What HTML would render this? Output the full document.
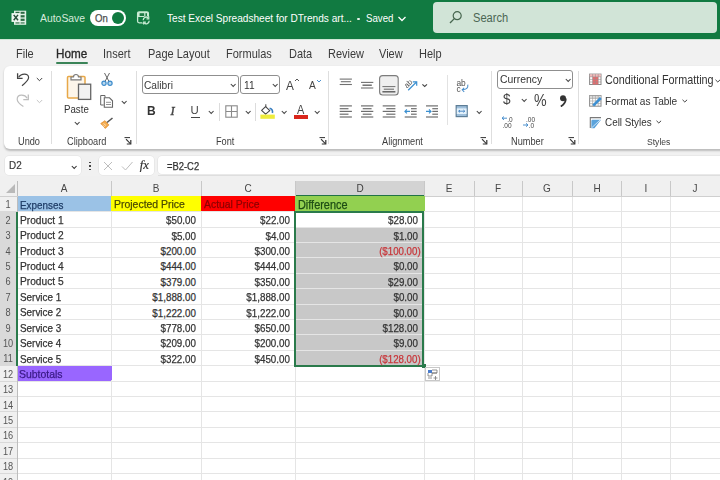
<!DOCTYPE html>
<html><head><meta charset="utf-8"><style>
html,body{margin:0;padding:0}
body{width:720px;height:480px;overflow:hidden;position:relative;background:#f1f1f1;font-family:"Liberation Sans",sans-serif}
.t{position:absolute;line-height:1;white-space:pre}
.r{position:absolute}
#wrap{position:absolute;left:0;top:0;width:720px;height:480px;overflow:hidden;filter:blur(0.4px)}
</style></head><body><div id="wrap">
<div class="r" style="left:0px;top:0px;width:720px;height:38.5px;background:#117a41"></div>
<div class="r" style="left:0px;top:38.5px;width:720px;height:1.5px;background:#cfe6d6"></div>
<svg class="r" style="left:11px;top:10px" width="16" height="16" viewBox="0 0 16 16"><rect x="3" y="0.7" width="12.2" height="14.1" fill="#dff1e4"/><g fill="#2c6a43"><rect x="4.5" y="1.8" width="4" height="2"/><rect x="9.6" y="1.8" width="4" height="2"/><rect x="9.6" y="5.2" width="4" height="2.2"/><rect x="9.6" y="8.7" width="4" height="2.2"/><rect x="4.5" y="12" width="4" height="1.8" opacity="0.6"/><rect x="9.6" y="12" width="4" height="1.8" opacity="0.6"/></g><rect x="0.5" y="3.1" width="8.6" height="8.8" fill="#eef8f1"/><path d="M2.7 4.9l4.3 5.4M7 4.9l-4.3 5.4" stroke="#28503a" stroke-width="1.5"/></svg>
<div class="t" style="left:40.00px;top:12.52px;font-size:11.44px;color:#d6eadc;font-weight:400;transform:scaleX(0.9091);transform-origin:left;">AutoSave</div>
<div class="r" style="left:90px;top:10px;width:36.3px;height:16px;background:#fff;border-radius:8px"></div>
<div class="t" style="left:94.90px;top:12.96px;font-size:10.56px;color:#505050;font-weight:400;transform:scaleX(0.9091);transform-origin:left;-webkit-text-stroke:0.25px #505050">On</div>
<div class="r" style="left:111.7px;top:11.8px;width:12.3px;height:12.3px;border-radius:50%;background:#117a41"></div>
<svg class="r" style="left:135px;top:10px" width="16" height="16" viewBox="0 0 16 16"><rect x="2.6" y="2" width="10.8" height="10.8" rx="1.5" fill="none" stroke="#c9ecd4" stroke-width="1.3"/><rect x="2.6" y="2" width="10.8" height="5" fill="#c9ecd4"/><rect x="4.6" y="3.2" width="4.6" height="2.8" fill="#1f7a45"/><rect x="10.4" y="3.2" width="1.6" height="2.8" fill="#1f7a45"/><circle cx="11.2" cy="10.5" r="4.3" fill="#117a41"/><path d="M8.2 10.2a3 3 0 0 1 5.2 -2" fill="none" stroke="#c9ecd4" stroke-width="1.3"/><path d="M14.2 10.8a3 3 0 0 1 -5.2 2" fill="none" stroke="#c9ecd4" stroke-width="1.3"/><path d="M13.8 6.6v2.3h-2.3M8.6 14.4v-2.3h2.3" fill="none" stroke="#c9ecd4" stroke-width="1.1"/></svg>
<div class="t" style="left:166.60px;top:13.00px;font-size:11.11px;color:#ffffff;font-weight:400;transform:scaleX(0.9091);transform-origin:left;">Test Excel Spreadsheet for DTrends art...</div>
<div class="r" style="left:357px;top:17.6px;width:2.6px;height:2.6px;border-radius:50%;background:#e8f3eb"></div>
<div class="t" style="left:365.60px;top:13.37px;font-size:10.67px;color:#ffffff;font-weight:400;transform:scaleX(0.9091);transform-origin:left;">Saved</div>
<svg class="r" style="left:397px;top:15px" width="10" height="8" viewBox="0 0 10 8"><path d="M1.5 2l3.5 3.5 3.5-3.5" fill="none" stroke="#fff" stroke-width="1.3"/></svg>
<div class="r" style="left:432.8px;top:2px;width:284.4px;height:31px;background:#d1e4d7;border-radius:4px"></div>
<svg class="r" style="left:448px;top:10px" width="16" height="15" viewBox="0 0 16 15"><circle cx="9.2" cy="5.7" r="4" fill="none" stroke="#47664f" stroke-width="1.2"/><path d="M6.3 8.6l-4.3 4.4" stroke="#47664f" stroke-width="1.3"/></svg>
<div class="t" style="left:473.00px;top:12.26px;font-size:12.21px;color:#4b6653;font-weight:400;transform:scaleX(0.9091);transform-origin:left;">Search</div>
<div class="t" style="left:16.10px;top:48.26px;font-size:12.10px;color:#3b3b3b;font-weight:400;transform:scaleX(0.9091);transform-origin:left;">File</div>
<div class="t" style="left:56.10px;top:47.61px;font-size:12.87px;color:#2a2a2a;font-weight:400;transform:scaleX(0.9091);transform-origin:left;-webkit-text-stroke:0.35px #2a2a2a">Home</div>
<div class="t" style="left:102.70px;top:48.26px;font-size:12.10px;color:#3b3b3b;font-weight:400;transform:scaleX(0.9091);transform-origin:left;">Insert</div>
<div class="t" style="left:147.70px;top:48.26px;font-size:12.10px;color:#3b3b3b;font-weight:400;transform:scaleX(0.9091);transform-origin:left;">Page Layout</div>
<div class="t" style="left:226.10px;top:48.26px;font-size:12.10px;color:#3b3b3b;font-weight:400;transform:scaleX(0.9091);transform-origin:left;">Formulas</div>
<div class="t" style="left:288.60px;top:48.26px;font-size:12.10px;color:#3b3b3b;font-weight:400;transform:scaleX(0.9091);transform-origin:left;">Data</div>
<div class="t" style="left:328.20px;top:48.26px;font-size:12.10px;color:#3b3b3b;font-weight:400;transform:scaleX(0.9091);transform-origin:left;">Review</div>
<div class="t" style="left:378.70px;top:48.26px;font-size:12.10px;color:#3b3b3b;font-weight:400;transform:scaleX(0.9091);transform-origin:left;">View</div>
<div class="t" style="left:419.00px;top:48.26px;font-size:12.10px;color:#3b3b3b;font-weight:400;transform:scaleX(0.9091);transform-origin:left;">Help</div>
<div class="r" style="left:56.4px;top:62.2px;width:31.6px;height:1.8px;background:#3b8458;border-radius:1px"></div>
<div class="r" style="left:4.4px;top:66px;width:730px;height:82.5px;background:#fff;border-radius:6px;box-shadow:0 1.5px 2px rgba(0,0,0,0.22)"></div>
<div class="r" style="left:51.4px;top:71px;width:1px;height:73px;background:#dedede"></div>
<div class="r" style="left:135.5px;top:71px;width:1px;height:73px;background:#dedede"></div>
<div class="r" style="left:328.4px;top:71px;width:1px;height:73px;background:#dedede"></div>
<div class="r" style="left:490.6px;top:71px;width:1px;height:73px;background:#dedede"></div>
<div class="r" style="left:578px;top:71px;width:1px;height:73px;background:#dedede"></div>
<div class="r" style="left:447.3px;top:75px;width:1px;height:50px;background:#e2e2e2"></div>
<div class="r" style="left:219px;top:102.5px;width:1px;height:18px;background:#dcdcdc"></div>
<div class="r" style="left:255.3px;top:102.5px;width:1px;height:18px;background:#dcdcdc"></div>
<div class="t" style="left:18.30px;top:136.83px;font-size:10.12px;color:#3d3d3d;font-weight:400;transform:scaleX(0.9091);transform-origin:left;">Undo</div>
<div class="t" style="left:66.80px;top:136.83px;font-size:10.12px;color:#3d3d3d;font-weight:400;transform:scaleX(0.9091);transform-origin:left;">Clipboard</div>
<div class="t" style="left:216.40px;top:136.83px;font-size:10.12px;color:#3d3d3d;font-weight:400;transform:scaleX(0.9091);transform-origin:left;">Font</div>
<div class="t" style="left:381.50px;top:136.83px;font-size:10.12px;color:#3d3d3d;font-weight:400;transform:scaleX(0.9091);transform-origin:left;">Alignment</div>
<div class="t" style="left:511.30px;top:136.83px;font-size:10.12px;color:#3d3d3d;font-weight:400;transform:scaleX(0.9091);transform-origin:left;">Number</div>
<div class="t" style="left:646.50px;top:137.39px;font-size:9.46px;color:#3d3d3d;font-weight:400;transform:scaleX(0.9091);transform-origin:left;">Styles</div>
<svg class="r" style="left:124.3px;top:137px" width="8" height="8" viewBox="0 0 8 8"><path d="M0.5 0.6h5.5" stroke="#333" stroke-width="1"/><path d="M2 2.2l4.6 4.6" stroke="#333" stroke-width="1.1"/><path d="M6.8 3v4h-4" fill="none" stroke="#333" stroke-width="1.2"/></svg>
<svg class="r" style="left:318.5px;top:137px" width="8" height="8" viewBox="0 0 8 8"><path d="M0.5 0.6h5.5" stroke="#333" stroke-width="1"/><path d="M2 2.2l4.6 4.6" stroke="#333" stroke-width="1.1"/><path d="M6.8 3v4h-4" fill="none" stroke="#333" stroke-width="1.2"/></svg>
<svg class="r" style="left:479.5px;top:137px" width="8" height="8" viewBox="0 0 8 8"><path d="M0.5 0.6h5.5" stroke="#333" stroke-width="1"/><path d="M2 2.2l4.6 4.6" stroke="#333" stroke-width="1.1"/><path d="M6.8 3v4h-4" fill="none" stroke="#333" stroke-width="1.2"/></svg>
<svg class="r" style="left:567.7px;top:137px" width="8" height="8" viewBox="0 0 8 8"><path d="M0.5 0.6h5.5" stroke="#333" stroke-width="1"/><path d="M2 2.2l4.6 4.6" stroke="#333" stroke-width="1.1"/><path d="M6.8 3v4h-4" fill="none" stroke="#333" stroke-width="1.2"/></svg>
<svg class="r" style="left:14px;top:70px" width="18" height="20" viewBox="14 70 18 20"><path d="M18.6 77.3C21 73.2 28.6 72.6 28.6 77.6C28.6 80.3 25.2 83.2 22 85.8" fill="none" stroke="#444" stroke-width="1.2"/><path d="M17.6 73.2V78.4H22.6" fill="none" stroke="#444" stroke-width="1.3"/></svg>
<svg class="r" style="left:36.2px;top:76.8px" width="7" height="5" viewBox="0 0 7 5"><path d="M0.8 1l2.7 2.7 2.7-2.7" fill="none" stroke="#444" stroke-width="1.0"/></svg>
<svg class="r" style="left:14px;top:91px" width="18" height="19" viewBox="14 91 18 19"><path d="M27.2 98.2C24.8 94 17.2 93.8 17.2 99.2C17.2 102 20.4 104.6 23.4 106.4" fill="none" stroke="#bdbdbd" stroke-width="1.2"/><path d="M28.3 94.4V99.6H23.3" fill="none" stroke="#bdbdbd" stroke-width="1.3"/></svg>
<svg class="r" style="left:36.4px;top:99.2px" width="7" height="5" viewBox="0 0 7 5"><path d="M0.8 1l2.7 2.7 2.7-2.7" fill="none" stroke="#c4c4c4" stroke-width="1.0"/></svg>
<svg class="r" style="left:64px;top:71px" width="30" height="30" viewBox="0 0 30 30"><rect x="3.5" y="5.5" width="17.5" height="21.5" rx="1" fill="#fdf6ea" stroke="#e8a848" stroke-width="1.5"/><path d="M7 8.8h10v-2.8h-2.5a2.5 2.5 0 0 0 -5 0h-2.5z" fill="#fff" stroke="#7a7a7a" stroke-width="1.2"/><rect x="14.5" y="13.2" width="12.2" height="15.2" fill="#f2f2f2" stroke="#666" stroke-width="1.3"/></svg>
<div class="t" style="left:64.30px;top:103.77px;font-size:10.67px;color:#333;font-weight:400;transform:scaleX(0.9091);transform-origin:left;">Paste</div>
<svg class="r" style="left:73.8px;top:121.0px" width="7" height="5" viewBox="0 0 7 5"><path d="M0.8 1l2.4 2.4 2.4-2.4" fill="none" stroke="#444" stroke-width="1.05"/></svg>
<svg class="r" style="left:101px;top:72px" width="12" height="15" viewBox="0 0 12 15"><path d="M3.5 1l4.5 8.5M8.5 1l-4.5 8.5" stroke="#666" stroke-width="1"/><circle cx="3" cy="11.3" r="2.1" fill="#bcd9ee" stroke="#3d8ccc" stroke-width="1.2"/><circle cx="9" cy="11.3" r="2.1" fill="#bcd9ee" stroke="#3d8ccc" stroke-width="1.2"/></svg>
<svg class="r" style="left:99.5px;top:94.5px" width="14" height="13" viewBox="0 0 14 13"><path d="M5 2.5v-2h-4.3v9.5h3" fill="none" stroke="#666" stroke-width="1"/><path d="M4.3 2.8h5.2l3 3v6.5h-8.2z" fill="#fff" stroke="#666" stroke-width="1.1"/><path d="M6 7.3h5M6 9.5h5" stroke="#888" stroke-width="0.9"/></svg>
<svg class="r" style="left:120.5px;top:99.7px" width="7" height="5" viewBox="0 0 7 5"><path d="M0.8 1l2.4 2.4 2.4-2.4" fill="none" stroke="#444" stroke-width="1.05"/></svg>
<svg class="r" style="left:100px;top:116.5px" width="14" height="12" viewBox="0 0 14 12"><path d="M0.8 6.5l4.2-2.8 3.8 4.2-3.5 3.5z" fill="#f3ab4e" stroke="#e08a2a" stroke-width="0.8"/><path d="M7 5.5l5.5-4.5" stroke="#555" stroke-width="1.6"/><path d="M2.5 8.2l2.3 1.6M3.5 6.5l2.5 2" stroke="#fff" stroke-width="0.6"/></svg>
<div class="r" style="left:142px;top:75.3px;width:97px;height:19px;box-sizing:border-box;border:1px solid #8f8f8f;border-radius:3px;background:#fff"></div>
<div class="t" style="left:144.20px;top:80.00px;font-size:11.22px;color:#3a3a3a;font-weight:400;transform:scaleX(0.9091);transform-origin:left;">Calibri</div>
<svg class="r" style="left:229.8px;top:83.2px" width="7" height="5" viewBox="0 0 7 5"><path d="M0.8 1l2.4 2.4 2.4-2.4" fill="none" stroke="#444" stroke-width="1.05"/></svg>
<div class="r" style="left:240.3px;top:75.3px;width:39.3px;height:19px;box-sizing:border-box;border:1px solid #8f8f8f;border-radius:3px;background:#fff"></div>
<div class="t" style="left:243.70px;top:80.10px;font-size:11.22px;color:#333;font-weight:400;transform:scaleX(0.9091);transform-origin:left;">11</div>
<svg class="r" style="left:271.8px;top:83.2px" width="7" height="5" viewBox="0 0 7 5"><path d="M0.8 1l2.4 2.4 2.4-2.4" fill="none" stroke="#444" stroke-width="1.05"/></svg>
<div class="t" style="left:285.70px;top:78.61px;font-size:12.98px;color:#444;font-weight:400;transform:scaleX(0.9091);transform-origin:left;">A</div>
<svg class="r" style="left:294px;top:78px" width="6" height="4" viewBox="0 0 6 4"><path d="M1 3l2-2 2 2" fill="none" stroke="#444" stroke-width="0.9"/></svg>
<div class="t" style="left:308.50px;top:80.10px;font-size:11.22px;color:#444;font-weight:400;transform:scaleX(0.9091);transform-origin:left;">A</div>
<svg class="r" style="left:315.5px;top:79px" width="6" height="4" viewBox="0 0 6 4"><path d="M1 1l2 2 2-2" fill="none" stroke="#3a86c8" stroke-width="0.9"/></svg>
<div class="t" style="left:147.00px;top:104.33px;font-size:13.20px;color:#333;font-weight:700;transform:scaleX(0.9091);transform-origin:left;">B</div>
<div class="t" style="left:170.40px;top:105.22px;font-size:12.50px;color:#444;font-weight:400;transform:scaleX(1.0000);transform-origin:left;font-family:'Liberation Serif';font-style:italic;-webkit-text-stroke:0.4px #444">I</div>
<div class="t" style="left:190.60px;top:105.35px;font-size:11.40px;color:#444;font-weight:400;transform:scaleX(1.0000);transform-origin:left;">U</div>
<div class="r" style="left:191px;top:117.2px;width:8.5px;height:1.1px;background:#444"></div>
<svg class="r" style="left:207.8px;top:109.7px" width="7" height="5" viewBox="0 0 7 5"><path d="M0.8 1l2.4 2.4 2.4-2.4" fill="none" stroke="#444" stroke-width="1.05"/></svg>
<svg class="r" style="left:224.5px;top:104.8px" width="13" height="13" viewBox="0 0 13 13"><rect x="0.8" y="0.8" width="11.4" height="11.4" fill="none" stroke="#8a8a8a" stroke-width="1.1"/><path d="M6.5 1v11M1 6.5h11" stroke="#8a8a8a" stroke-width="1.1"/></svg>
<svg class="r" style="left:244.8px;top:109.7px" width="7" height="5" viewBox="0 0 7 5"><path d="M0.8 1l2.4 2.4 2.4-2.4" fill="none" stroke="#444" stroke-width="1.05"/></svg>
<svg class="r" style="left:258px;top:102px" width="19" height="19" viewBox="258 102 19 19"><path d="M265.8 104.2V107.6" stroke="#555" stroke-width="1.1"/><path d="M265.6 106.6L269.8 110.6L265.6 114.2L261.6 110.4z" fill="#fff" stroke="#444" stroke-width="1.1" stroke-linejoin="round"/><path d="M269.6 108.2Q273.2 109.2 272.4 113" fill="none" stroke="#3a7fc0" stroke-width="1.6"/><rect x="260.4" y="114.6" width="14.4" height="4.2" fill="#eeec3c"/></svg>
<svg class="r" style="left:280.6px;top:109.7px" width="7" height="5" viewBox="0 0 7 5"><path d="M0.8 1l2.4 2.4 2.4-2.4" fill="none" stroke="#444" stroke-width="1.05"/></svg>
<div class="t" style="left:297.40px;top:104.16px;font-size:12.10px;color:#444;font-weight:400;transform:scaleX(0.9091);transform-origin:left;">A</div>
<div class="r" style="left:293.8px;top:115.3px;width:14.2px;height:3.6px;background:#d9261c"></div>
<svg class="r" style="left:314.1px;top:109.7px" width="7" height="5" viewBox="0 0 7 5"><path d="M0.8 1l2.4 2.4 2.4-2.4" fill="none" stroke="#444" stroke-width="1.05"/></svg>
<svg class="r" style="left:330px;top:70px" width="115" height="55" viewBox="330 70 115 55"><path d="M339.7 79.1H351.9" stroke="#707070" stroke-width="1.1"/><path d="M340.8 81.7H350.8" stroke="#707070" stroke-width="1.1"/><path d="M339.7 84.5H351.9" stroke="#707070" stroke-width="1.1"/><path d="M361 82.4H373.3" stroke="#707070" stroke-width="1.1"/><path d="M362.5 85.2H371.8" stroke="#666" stroke-width="1.4"/><path d="M361 88.0H373.3" stroke="#707070" stroke-width="1.1"/><rect x="379.6" y="75.6" width="18.6" height="19.4" rx="3" fill="#efefef" stroke="#7c7c7c" stroke-width="1.1"/><path d="M382.4 86.6H395.4" stroke="#707070" stroke-width="1.0"/><path d="M383.8 89.2H394" stroke="#707070" stroke-width="1.1"/><path d="M382.4 91.8H395.4" stroke="#5a5a5a" stroke-width="1.4"/><g transform="rotate(-45 408.2 83.2)"><text x="403.6" y="86" font-size="7.6" fill="#4a4a4a" font-family="Liberation Sans">ab</text></g><path d="M408.2 90.2L416.5 82" stroke="#3a8fd0" stroke-width="1.2"/><path d="M412.8 81.9H416.7V85.8" fill="none" stroke="#3a8fd0" stroke-width="1.2"/><path d="M422.4 84.3l2.3 2.2 2.3-2.2" fill="none" stroke="#444" stroke-width="1.1"/><path d="M339.7 105.9H351.9" stroke="#6e6e6e" stroke-width="1.2"/><path d="M339.7 108.7H348.484" stroke="#6e6e6e" stroke-width="1.2"/><path d="M339.7 111.4H351.9" stroke="#6e6e6e" stroke-width="1.2"/><path d="M339.7 114.2H348.484" stroke="#6e6e6e" stroke-width="1.2"/><path d="M339.7 117.0H351.9" stroke="#6e6e6e" stroke-width="1.2"/><path d="M361 105.9H373.3" stroke="#6e6e6e" stroke-width="1.2"/><path d="M362.722 108.7H371.578" stroke="#6e6e6e" stroke-width="1.2"/><path d="M361 111.4H373.3" stroke="#6e6e6e" stroke-width="1.2"/><path d="M362.722 114.2H371.578" stroke="#6e6e6e" stroke-width="1.2"/><path d="M361 117.0H373.3" stroke="#6e6e6e" stroke-width="1.2"/><path d="M382.7 105.9H395.4" stroke="#6e6e6e" stroke-width="1.2"/><path d="M386.256 108.7H395.4" stroke="#6e6e6e" stroke-width="1.2"/><path d="M382.7 111.4H395.4" stroke="#6e6e6e" stroke-width="1.2"/><path d="M386.256 114.2H395.4" stroke="#6e6e6e" stroke-width="1.2"/><path d="M382.7 117.0H395.4" stroke="#6e6e6e" stroke-width="1.2"/><path d="M404.7 105.9H416.7" stroke="#6e6e6e" stroke-width="1.2"/><path d="M411.0 108.7H416.7" stroke="#6e6e6e" stroke-width="1.2"/><path d="M411.0 111.4H416.7" stroke="#6e6e6e" stroke-width="1.2"/><path d="M411.0 114.2H416.7" stroke="#6e6e6e" stroke-width="1.2"/><path d="M404.7 117.0H416.7" stroke="#6e6e6e" stroke-width="1.2"/><path d="M410 111.4H404.9M406.9 109.4l-2 2 2 2" fill="none" stroke="#3a8fd0" stroke-width="1.1"/><path d="M426 105.9H438" stroke="#6e6e6e" stroke-width="1.2"/><path d="M432.3 108.7H438" stroke="#6e6e6e" stroke-width="1.2"/><path d="M432.3 111.4H438" stroke="#6e6e6e" stroke-width="1.2"/><path d="M432.3 114.2H438" stroke="#6e6e6e" stroke-width="1.2"/><path d="M426 117.0H438" stroke="#6e6e6e" stroke-width="1.2"/><path d="M426 111.4H431M429 109.4l2 2-2 2" fill="none" stroke="#3a8fd0" stroke-width="1.1"/></svg>
<svg class="r" style="left:453px;top:76px" width="19" height="18" viewBox="453 76 19 18"><text x="456.4" y="85.6" font-size="8.4" fill="#505050" font-family="Liberation Sans">ab</text><text x="456.4" y="91.8" font-size="8.4" fill="#505050" font-family="Liberation Sans">c</text><path d="M467.8 84.6Q468.6 89.6 462.2 89.8M464.2 87.8l-2 2 2 2" fill="none" stroke="#4a8fcc" stroke-width="1.1"/></svg>
<svg class="r" style="left:453px;top:103px" width="17" height="16" viewBox="453 103 17 16"><rect x="456.2" y="105.6" width="11" height="11" fill="#9fc0dc" stroke="#5d7d96" stroke-width="1.2"/><rect x="456.8" y="108.4" width="9.8" height="5.6" fill="#e3f1fb"/><path d="M458.6 111.2H464.8M460 110l-1.3 1.2 1.3 1.2M463.4 110l1.3 1.2-1.3 1.2" fill="none" stroke="#3d7fc0" stroke-width="0.9"/></svg>
<svg class="r" style="left:475.6px;top:110.0px" width="7" height="5" viewBox="0 0 7 5"><path d="M0.8 1l2.4 2.4 2.4-2.4" fill="none" stroke="#444" stroke-width="1.05"/></svg>
<div class="r" style="left:497px;top:69.5px;width:76px;height:19px;box-sizing:border-box;border:1px solid #8f8f8f;border-radius:3px;background:#fff"></div>
<div class="t" style="left:499.50px;top:74.12px;font-size:11.44px;color:#333;font-weight:400;transform:scaleX(0.9091);transform-origin:left;">Currency</div>
<svg class="r" style="left:564.8px;top:77.7px" width="7" height="5" viewBox="0 0 7 5"><path d="M0.8 1l2.4 2.4 2.4-2.4" fill="none" stroke="#444" stroke-width="1.05"/></svg>
<div class="t" style="left:502.60px;top:91.94px;font-size:14.96px;color:#444;font-weight:400;transform:scaleX(0.9091);transform-origin:left;">$</div>
<svg class="r" style="left:520.8px;top:97.7px" width="7" height="5" viewBox="0 0 7 5"><path d="M0.8 1l2.4 2.4 2.4-2.4" fill="none" stroke="#444" stroke-width="1.05"/></svg>
<div class="t" style="left:533.90px;top:92.78px;font-size:15.62px;color:#444;font-weight:400;transform:scaleX(0.9091);transform-origin:left;">%</div>
<svg class="r" style="left:558.5px;top:95px" width="8" height="12" viewBox="0 0 8 12"><circle cx="4" cy="3.3" r="3" fill="#333"/><path d="M6.8 3.5q0 5-5 8" fill="none" stroke="#333" stroke-width="1.8"/></svg>
<svg class="r" style="left:500.5px;top:115px" width="15" height="14" viewBox="0 0 15 14"><path d="M6 3.2h-5M3 1.5l-2 1.7 2 1.7" fill="none" stroke="#3a86c8" stroke-width="0.9"/><text x="6.3" y="6.5" font-size="6.5" fill="#444" font-family="Liberation Sans">.0</text><text x="1.5" y="13" font-size="6.5" fill="#444" font-family="Liberation Sans">.00</text></svg>
<svg class="r" style="left:521.5px;top:115px" width="16" height="14" viewBox="0 0 16 14"><text x="4" y="6.5" font-size="6.5" fill="#444" font-family="Liberation Sans">.00</text><path d="M1 10h5M4 8.3l2 1.7-2 1.7" fill="none" stroke="#3a86c8" stroke-width="0.9"/><text x="6.8" y="13" font-size="6.5" fill="#444" font-family="Liberation Sans">.0</text></svg>
<svg class="r" style="left:586px;top:70px" width="18" height="62" viewBox="586 70 18 62"><rect x="589.6" y="74.1" width="11.4" height="10.4" fill="#fff" stroke="#8a8a8a" stroke-width="1"/><rect x="592.6" y="76.8" width="5.6" height="7.6" fill="#ec6a6c"/><rect x="589.8" y="74.3" width="11" height="2.5" fill="#f3b9ba"/><path d="M592.6 74.1V84.5M595.4 74.1V84.5M598.2 74.1V84.5M589.6 76.8H601M589.6 79.4H601M589.6 82H601" stroke="#9a8a8a" stroke-width="0.6"/><rect x="589.6" y="95.6" width="11.4" height="10.6" fill="#fff" stroke="#8a8a8a" stroke-width="1"/><rect x="589.8" y="95.8" width="11" height="2.6" fill="#d9d9d9"/><path d="M592.6 95.6V106.2M595.4 95.6V106.2M598.2 95.6V106.2M589.6 98.4H601M589.6 101H601M589.6 103.6H601" stroke="#9a9a9a" stroke-width="0.6"/><path d="M593.2 105.6L600.8 98" stroke="#3d8fd1" stroke-width="2.6"/><path d="M589.8 117.6H601M590.3 117.6V128" fill="none" stroke="#7a7a7a" stroke-width="1.1"/><path d="M592.2 119.8H601L594.5 128.2H591.4V120.5z" fill="#5aa3dc"/><path d="M592 127.5L600.5 119.6" stroke="#fff" stroke-width="0.7"/></svg>
<div class="t" style="left:605.20px;top:74.84px;font-size:11.88px;color:#333;font-weight:400;transform:scaleX(0.9091);transform-origin:left;">Conditional Formatting</div>
<svg class="r" style="left:715px;top:78.5px" width="6" height="4" viewBox="0 0 6 4"><path d="M0.5 0.8l2.3 2.2 2.3-2.2" fill="none" stroke="#444" stroke-width="1"/></svg>
<div class="t" style="left:605.20px;top:95.90px;font-size:11.11px;color:#333;font-weight:400;transform:scaleX(0.9091);transform-origin:left;">Format as Table</div>
<svg class="r" style="left:681.5px;top:99.2px" width="6" height="4" viewBox="0 0 6 4"><path d="M0.5 0.8l2.3 2.2 2.3-2.2" fill="none" stroke="#444" stroke-width="1"/></svg>
<div class="t" style="left:605.40px;top:117.28px;font-size:10.89px;color:#333;font-weight:400;transform:scaleX(0.9091);transform-origin:left;">Cell Styles</div>
<svg class="r" style="left:655.6px;top:120.4px" width="6" height="4" viewBox="0 0 6 4"><path d="M0.5 0.8l2.3 2.2 2.3-2.2" fill="none" stroke="#444" stroke-width="1"/></svg>
<div class="r" style="left:5.3px;top:156.4px;width:75.7px;height:18.4px;background:#fff;border-radius:4px;box-shadow:0 0 0 0.6px #e2e2e2"></div>
<div class="t" style="left:9.20px;top:160.72px;font-size:10.49px;color:#3a3a3a;font-weight:400;transform:scaleX(0.9434);transform-origin:left;-webkit-text-stroke:0.2px #3a3a3a">D2</div>
<svg class="r" style="left:70.6px;top:165.2px" width="7" height="5" viewBox="0 0 7 5"><path d="M0.8 1l2.4 2.4 2.4-2.4" fill="none" stroke="#333" stroke-width="1.05"/></svg>
<div class="r" style="left:89.3px;top:161.5px;width:1.6px;height:1.6px;background:#444"></div>
<div class="r" style="left:89.3px;top:165px;width:1.6px;height:1.6px;background:#444"></div>
<div class="r" style="left:89.3px;top:168.5px;width:1.6px;height:1.6px;background:#444"></div>
<div class="r" style="left:99.3px;top:156.2px;width:54.4px;height:18.4px;background:#fff;border-radius:4px;box-shadow:0 0 0 0.6px #e2e2e2"></div>
<svg class="r" style="left:103px;top:161px" width="10" height="10" viewBox="0 0 10 10"><path d="M1 1l8 8M9 1l-8 8" stroke="#bdbdbd" stroke-width="1"/></svg>
<svg class="r" style="left:120.5px;top:161px" width="12.5" height="10" viewBox="0 0 12.5 10"><path d="M1 5.5l3.5 3.5 7-8" fill="none" stroke="#bdbdbd" stroke-width="1"/></svg>
<div class="t" style="left:139.80px;top:158.53px;font-size:12.60px;color:#333;font-weight:400;transform:scaleX(1.0000);transform-origin:left;font-family:'Liberation Serif';-webkit-text-stroke:0.2px #333"><i>fx</i></div>
<div class="r" style="left:158.3px;top:156.0px;width:570px;height:18.4px;background:#fff;border-radius:4px 0 0 4px;box-shadow:0 0 0 0.6px #e2e2e2"></div>
<div class="t" style="left:167.20px;top:161.55px;font-size:10.34px;color:#333;font-weight:400;transform:scaleX(0.9091);transform-origin:left;-webkit-text-stroke:0.25px #333">=B2-C2</div>
<div class="r" style="left:17.5px;top:196.5px;width:703px;height:290px;background:#fff"></div>
<div class="r" style="left:17.5px;top:176px;width:703px;height:20.2px;background:#f0f0f0"></div>
<div class="r" style="left:158px;top:174.5px;width:562px;height:1.5px;background:#dedede"></div>
<div class="r" style="left:0px;top:176px;width:17.5px;height:304px;background:#f0f0f0"></div>
<div class="r" style="left:295.5px;top:181px;width:129px;height:15px;background:#d3d3d3"></div>
<div class="r" style="left:295.5px;top:194.8px;width:129px;height:2px;background:#217346"></div>
<div class="r" style="left:0px;top:211.6px;width:16px;height:154.0px;background:#d9d9d9"></div>
<div class="r" style="left:17.5px;top:196.2px;width:93.5px;height:15.4px;background:#9bc2e6"></div>
<div class="r" style="left:111px;top:196.2px;width:90px;height:15.4px;background:#ffff00"></div>
<div class="r" style="left:201px;top:196.2px;width:94px;height:15.4px;background:#ff0000"></div>
<div class="r" style="left:295px;top:196.2px;width:129.5px;height:15.4px;background:#92d050"></div>
<div class="r" style="left:17.5px;top:365.6px;width:93.5px;height:15.4px;background:#9966ff"></div>
<div class="r" style="left:295px;top:227.0px;width:129.5px;height:138.6px;background:#c8c8c8"></div>
<div class="r" style="left:17.5px;top:211.10px;width:703px;height:1px;background:#e5e5e5"></div>
<div class="r" style="left:17.5px;top:226.50px;width:703px;height:1px;background:#e5e5e5"></div>
<div class="r" style="left:17.5px;top:241.90px;width:703px;height:1px;background:#e5e5e5"></div>
<div class="r" style="left:17.5px;top:257.30px;width:703px;height:1px;background:#e5e5e5"></div>
<div class="r" style="left:17.5px;top:272.70px;width:703px;height:1px;background:#e5e5e5"></div>
<div class="r" style="left:17.5px;top:288.10px;width:703px;height:1px;background:#e5e5e5"></div>
<div class="r" style="left:17.5px;top:303.50px;width:703px;height:1px;background:#e5e5e5"></div>
<div class="r" style="left:17.5px;top:318.90px;width:703px;height:1px;background:#e5e5e5"></div>
<div class="r" style="left:17.5px;top:334.30px;width:703px;height:1px;background:#e5e5e5"></div>
<div class="r" style="left:17.5px;top:349.70px;width:703px;height:1px;background:#e5e5e5"></div>
<div class="r" style="left:17.5px;top:365.10px;width:703px;height:1px;background:#e5e5e5"></div>
<div class="r" style="left:17.5px;top:380.50px;width:703px;height:1px;background:#e5e5e5"></div>
<div class="r" style="left:17.5px;top:395.90px;width:703px;height:1px;background:#e5e5e5"></div>
<div class="r" style="left:17.5px;top:411.30px;width:703px;height:1px;background:#e5e5e5"></div>
<div class="r" style="left:17.5px;top:426.70px;width:703px;height:1px;background:#e5e5e5"></div>
<div class="r" style="left:17.5px;top:442.10px;width:703px;height:1px;background:#e5e5e5"></div>
<div class="r" style="left:17.5px;top:457.50px;width:703px;height:1px;background:#e5e5e5"></div>
<div class="r" style="left:17.5px;top:472.90px;width:703px;height:1px;background:#e5e5e5"></div>
<div class="r" style="left:17.5px;top:488.30px;width:703px;height:1px;background:#e5e5e5"></div>
<div class="r" style="left:110.50px;top:196.5px;width:1px;height:290px;background:#e5e5e5"></div>
<div class="r" style="left:200.50px;top:196.5px;width:1px;height:290px;background:#e5e5e5"></div>
<div class="r" style="left:294.50px;top:196.5px;width:1px;height:290px;background:#e5e5e5"></div>
<div class="r" style="left:424.00px;top:196.5px;width:1px;height:290px;background:#e5e5e5"></div>
<div class="r" style="left:473.50px;top:196.5px;width:1px;height:290px;background:#e5e5e5"></div>
<div class="r" style="left:522.00px;top:196.5px;width:1px;height:290px;background:#e5e5e5"></div>
<div class="r" style="left:571.50px;top:196.5px;width:1px;height:290px;background:#e5e5e5"></div>
<div class="r" style="left:620.50px;top:196.5px;width:1px;height:290px;background:#e5e5e5"></div>
<div class="r" style="left:670.00px;top:196.5px;width:1px;height:290px;background:#e5e5e5"></div>
<div class="r" style="left:719.50px;top:196.5px;width:1px;height:290px;background:#e5e5e5"></div>
<div class="r" style="left:110.50px;top:181px;width:1px;height:15px;background:#c8c8c8"></div>
<div class="r" style="left:200.50px;top:181px;width:1px;height:15px;background:#c8c8c8"></div>
<div class="r" style="left:294.50px;top:181px;width:1px;height:15px;background:#c8c8c8"></div>
<div class="r" style="left:424.00px;top:181px;width:1px;height:15px;background:#c8c8c8"></div>
<div class="r" style="left:473.50px;top:181px;width:1px;height:15px;background:#c8c8c8"></div>
<div class="r" style="left:522.00px;top:181px;width:1px;height:15px;background:#c8c8c8"></div>
<div class="r" style="left:571.50px;top:181px;width:1px;height:15px;background:#c8c8c8"></div>
<div class="r" style="left:620.50px;top:181px;width:1px;height:15px;background:#c8c8c8"></div>
<div class="r" style="left:670.00px;top:181px;width:1px;height:15px;background:#c8c8c8"></div>
<div class="r" style="left:719.50px;top:181px;width:1px;height:15px;background:#c8c8c8"></div>
<div class="r" style="left:17px;top:181px;width:1px;height:300px;background:#bdbdbd"></div>
<div class="r" style="left:0px;top:195.5px;width:720px;height:1px;background:#cfcfcf"></div>
<div class="r" style="left:0px;top:211.10px;width:17px;height:1px;background:#d9d9d9"></div>
<div class="r" style="left:0px;top:226.50px;width:17px;height:1px;background:#d9d9d9"></div>
<div class="r" style="left:0px;top:241.90px;width:17px;height:1px;background:#d9d9d9"></div>
<div class="r" style="left:0px;top:257.30px;width:17px;height:1px;background:#d9d9d9"></div>
<div class="r" style="left:0px;top:272.70px;width:17px;height:1px;background:#d9d9d9"></div>
<div class="r" style="left:0px;top:288.10px;width:17px;height:1px;background:#d9d9d9"></div>
<div class="r" style="left:0px;top:303.50px;width:17px;height:1px;background:#d9d9d9"></div>
<div class="r" style="left:0px;top:318.90px;width:17px;height:1px;background:#d9d9d9"></div>
<div class="r" style="left:0px;top:334.30px;width:17px;height:1px;background:#d9d9d9"></div>
<div class="r" style="left:0px;top:349.70px;width:17px;height:1px;background:#d9d9d9"></div>
<div class="r" style="left:0px;top:365.10px;width:17px;height:1px;background:#d9d9d9"></div>
<div class="r" style="left:0px;top:380.50px;width:17px;height:1px;background:#d9d9d9"></div>
<div class="r" style="left:0px;top:395.90px;width:17px;height:1px;background:#d9d9d9"></div>
<div class="r" style="left:0px;top:411.30px;width:17px;height:1px;background:#d9d9d9"></div>
<div class="r" style="left:0px;top:426.70px;width:17px;height:1px;background:#d9d9d9"></div>
<div class="r" style="left:0px;top:442.10px;width:17px;height:1px;background:#d9d9d9"></div>
<div class="r" style="left:0px;top:457.50px;width:17px;height:1px;background:#d9d9d9"></div>
<div class="r" style="left:0px;top:472.90px;width:17px;height:1px;background:#d9d9d9"></div>
<div class="r" style="left:0px;top:488.30px;width:17px;height:1px;background:#d9d9d9"></div>
<div class="r" style="left:16px;top:211.6px;width:2px;height:154.0px;background:#2a7a4b"></div>
<div class="r" style="left:17.5px;top:196.2px;width:93.5px;height:14.9px;background:#9bc2e6"></div>
<div class="r" style="left:111px;top:196.2px;width:90px;height:14.9px;background:#ffff00"></div>
<div class="r" style="left:201px;top:196.2px;width:94px;height:14.9px;background:#ff0000"></div>
<div class="r" style="left:295px;top:196.2px;width:129.5px;height:14.9px;background:#92d050"></div>
<div class="r" style="left:17.5px;top:365.6px;width:94px;height:14.9px;background:#9966ff"></div>
<svg class="r" style="left:6px;top:184px" width="10" height="9" viewBox="0 0 10 9"><path d="M9 0v9h-9z" fill="#b9b9b9"/></svg>
<div class="t" style="left:-35.75px;width:200px;text-align:center;top:182.69px;font-size:11.00px;color:#474747;font-weight:400;transform:scaleX(0.9091);transform-origin:center;">A</div>
<div class="t" style="left:56.00px;width:200px;text-align:center;top:182.69px;font-size:11.00px;color:#474747;font-weight:400;transform:scaleX(0.9091);transform-origin:center;">B</div>
<div class="t" style="left:148.00px;width:200px;text-align:center;top:182.69px;font-size:11.00px;color:#474747;font-weight:400;transform:scaleX(0.9091);transform-origin:center;">C</div>
<div class="t" style="left:259.75px;width:200px;text-align:center;top:182.69px;font-size:11.00px;color:#3d3d3d;font-weight:400;transform:scaleX(0.9091);transform-origin:center;">D</div>
<div class="t" style="left:349.25px;width:200px;text-align:center;top:182.69px;font-size:11.00px;color:#474747;font-weight:400;transform:scaleX(0.9091);transform-origin:center;">E</div>
<div class="t" style="left:398.25px;width:200px;text-align:center;top:182.69px;font-size:11.00px;color:#474747;font-weight:400;transform:scaleX(0.9091);transform-origin:center;">F</div>
<div class="t" style="left:447.25px;width:200px;text-align:center;top:182.69px;font-size:11.00px;color:#474747;font-weight:400;transform:scaleX(0.9091);transform-origin:center;">G</div>
<div class="t" style="left:496.50px;width:200px;text-align:center;top:182.69px;font-size:11.00px;color:#474747;font-weight:400;transform:scaleX(0.9091);transform-origin:center;">H</div>
<div class="t" style="left:545.75px;width:200px;text-align:center;top:182.69px;font-size:11.00px;color:#474747;font-weight:400;transform:scaleX(0.9091);transform-origin:center;">I</div>
<div class="t" style="left:595.25px;width:200px;text-align:center;top:182.69px;font-size:11.00px;color:#474747;font-weight:400;transform:scaleX(0.9091);transform-origin:center;">J</div>
<div class="t" style="left:-92.40px;width:200px;text-align:center;top:199.41px;font-size:10.86px;color:#555;font-weight:400;transform:scaleX(0.8475);transform-origin:center;">1</div>
<div class="t" style="left:-92.40px;width:200px;text-align:center;top:214.81px;font-size:10.86px;color:#555;font-weight:400;transform:scaleX(0.8475);transform-origin:center;">2</div>
<div class="t" style="left:-92.40px;width:200px;text-align:center;top:230.21px;font-size:10.86px;color:#555;font-weight:400;transform:scaleX(0.8475);transform-origin:center;">3</div>
<div class="t" style="left:-92.40px;width:200px;text-align:center;top:245.61px;font-size:10.86px;color:#555;font-weight:400;transform:scaleX(0.8475);transform-origin:center;">4</div>
<div class="t" style="left:-92.40px;width:200px;text-align:center;top:261.01px;font-size:10.86px;color:#555;font-weight:400;transform:scaleX(0.8475);transform-origin:center;">5</div>
<div class="t" style="left:-92.40px;width:200px;text-align:center;top:276.41px;font-size:10.86px;color:#555;font-weight:400;transform:scaleX(0.8475);transform-origin:center;">6</div>
<div class="t" style="left:-92.40px;width:200px;text-align:center;top:291.81px;font-size:10.86px;color:#555;font-weight:400;transform:scaleX(0.8475);transform-origin:center;">7</div>
<div class="t" style="left:-92.40px;width:200px;text-align:center;top:307.21px;font-size:10.86px;color:#555;font-weight:400;transform:scaleX(0.8475);transform-origin:center;">8</div>
<div class="t" style="left:-92.40px;width:200px;text-align:center;top:322.61px;font-size:10.86px;color:#555;font-weight:400;transform:scaleX(0.8475);transform-origin:center;">9</div>
<div class="t" style="left:-92.40px;width:200px;text-align:center;top:338.01px;font-size:10.86px;color:#555;font-weight:400;transform:scaleX(0.8475);transform-origin:center;">10</div>
<div class="t" style="left:-92.40px;width:200px;text-align:center;top:353.41px;font-size:10.86px;color:#555;font-weight:400;transform:scaleX(0.8475);transform-origin:center;">11</div>
<div class="t" style="left:-92.40px;width:200px;text-align:center;top:368.81px;font-size:10.86px;color:#555;font-weight:400;transform:scaleX(0.8475);transform-origin:center;">12</div>
<div class="t" style="left:-92.40px;width:200px;text-align:center;top:384.21px;font-size:10.86px;color:#555;font-weight:400;transform:scaleX(0.8475);transform-origin:center;">13</div>
<div class="t" style="left:-92.40px;width:200px;text-align:center;top:399.61px;font-size:10.86px;color:#555;font-weight:400;transform:scaleX(0.8475);transform-origin:center;">14</div>
<div class="t" style="left:-92.40px;width:200px;text-align:center;top:415.01px;font-size:10.86px;color:#555;font-weight:400;transform:scaleX(0.8475);transform-origin:center;">15</div>
<div class="t" style="left:-92.40px;width:200px;text-align:center;top:430.41px;font-size:10.86px;color:#555;font-weight:400;transform:scaleX(0.8475);transform-origin:center;">16</div>
<div class="t" style="left:-92.40px;width:200px;text-align:center;top:445.81px;font-size:10.86px;color:#555;font-weight:400;transform:scaleX(0.8475);transform-origin:center;">17</div>
<div class="t" style="left:-92.40px;width:200px;text-align:center;top:461.21px;font-size:10.86px;color:#555;font-weight:400;transform:scaleX(0.8475);transform-origin:center;">18</div>
<div class="t" style="left:-92.40px;width:200px;text-align:center;top:476.61px;font-size:10.86px;color:#555;font-weight:400;transform:scaleX(0.8475);transform-origin:center;">19</div>
<div class="r" style="left:294.2px;top:211px;width:130.3px;height:156px;box-sizing:border-box;border:2px solid #2a7a4b"></div>
<div class="r" style="left:421.8px;top:364.2px;width:4px;height:3.6px;background:#2a7a4b"></div>
<div class="r" style="left:425.3px;top:366.5px;width:15px;height:14.6px;box-sizing:border-box;border:1px solid #c8c8c8;background:#fff"></div>
<svg class="r" style="left:427px;top:368.5px" width="12" height="11" viewBox="0 0 12 11"><rect x="1" y="1" width="4" height="3" fill="#4a7ccc"/><path d="M5 1h5v3h-5M1 4v3h4v-3M5 4h5" fill="none" stroke="#666" stroke-width="0.7"/><path d="M1 9h4M8.5 7v4M6.5 9h4" stroke="#777" stroke-width="0.8"/></svg>
<div class="t" style="left:19.70px;top:199.68px;font-size:10.89px;color:#1f3c66;font-weight:400;transform:scaleX(0.9091);transform-origin:left;-webkit-text-stroke:0.25px currentColor">Expenses</div>
<div class="t" style="left:113.50px;top:199.17px;font-size:11.50px;color:#4b4b00;font-weight:400;transform:scaleX(0.9091);transform-origin:left;-webkit-text-stroke:0.25px currentColor">Projected Price</div>
<div class="t" style="left:203.70px;top:199.22px;font-size:11.44px;color:#8c0000;font-weight:400;transform:scaleX(0.9091);transform-origin:left;-webkit-text-stroke:0.25px currentColor">Actual Price</div>
<div class="t" style="left:297.50px;top:198.75px;font-size:11.99px;color:#1d4d14;font-weight:400;transform:scaleX(0.9091);transform-origin:left;-webkit-text-stroke:0.25px currentColor">Difference</div>
<div class="t" style="left:19.50px;top:214.80px;font-size:11.22px;color:#333;font-weight:400;transform:scaleX(0.9091);transform-origin:left;-webkit-text-stroke:0.25px currentColor">Product 1</div>
<div class="t" style="right:524.40px;top:215.17px;font-size:10.78px;color:#333;font-weight:400;transform:scaleX(0.9091);transform-origin:right;-webkit-text-stroke:0.25px currentColor">$50.00</div>
<div class="t" style="right:430.50px;top:215.17px;font-size:10.78px;color:#333;font-weight:400;transform:scaleX(0.9091);transform-origin:right;-webkit-text-stroke:0.25px currentColor">$22.00</div>
<div class="t" style="right:301.60px;top:215.17px;font-size:10.78px;color:#333;font-weight:400;transform:scaleX(0.9091);transform-origin:right;-webkit-text-stroke:0.25px currentColor">$28.00</div>
<div class="t" style="left:19.50px;top:230.20px;font-size:11.22px;color:#333;font-weight:400;transform:scaleX(0.9091);transform-origin:left;-webkit-text-stroke:0.25px currentColor">Product 2</div>
<div class="t" style="right:524.40px;top:230.57px;font-size:10.78px;color:#333;font-weight:400;transform:scaleX(0.9091);transform-origin:right;-webkit-text-stroke:0.25px currentColor">$5.00</div>
<div class="t" style="right:430.50px;top:230.57px;font-size:10.78px;color:#333;font-weight:400;transform:scaleX(0.9091);transform-origin:right;-webkit-text-stroke:0.25px currentColor">$4.00</div>
<div class="t" style="right:301.60px;top:230.57px;font-size:10.78px;color:#333;font-weight:400;transform:scaleX(0.9091);transform-origin:right;-webkit-text-stroke:0.25px currentColor">$1.00</div>
<div class="t" style="left:19.50px;top:245.60px;font-size:11.22px;color:#333;font-weight:400;transform:scaleX(0.9091);transform-origin:left;-webkit-text-stroke:0.25px currentColor">Product 3</div>
<div class="t" style="right:524.40px;top:245.97px;font-size:10.78px;color:#333;font-weight:400;transform:scaleX(0.9091);transform-origin:right;-webkit-text-stroke:0.25px currentColor">$200.00</div>
<div class="t" style="right:430.50px;top:245.97px;font-size:10.78px;color:#333;font-weight:400;transform:scaleX(0.9091);transform-origin:right;-webkit-text-stroke:0.25px currentColor">$300.00</div>
<div class="t" style="right:299.00px;top:246.07px;font-size:10.67px;color:#c8363a;font-weight:400;transform:scaleX(0.9091);transform-origin:right;-webkit-text-stroke:0.25px currentColor">($100.00)</div>
<div class="t" style="left:19.50px;top:261.00px;font-size:11.22px;color:#333;font-weight:400;transform:scaleX(0.9091);transform-origin:left;-webkit-text-stroke:0.25px currentColor">Product 4</div>
<div class="t" style="right:524.40px;top:261.37px;font-size:10.78px;color:#333;font-weight:400;transform:scaleX(0.9091);transform-origin:right;-webkit-text-stroke:0.25px currentColor">$444.00</div>
<div class="t" style="right:430.50px;top:261.37px;font-size:10.78px;color:#333;font-weight:400;transform:scaleX(0.9091);transform-origin:right;-webkit-text-stroke:0.25px currentColor">$444.00</div>
<div class="t" style="right:301.60px;top:261.37px;font-size:10.78px;color:#333;font-weight:400;transform:scaleX(0.9091);transform-origin:right;-webkit-text-stroke:0.25px currentColor">$0.00</div>
<div class="t" style="left:19.50px;top:276.40px;font-size:11.22px;color:#333;font-weight:400;transform:scaleX(0.9091);transform-origin:left;-webkit-text-stroke:0.25px currentColor">Product 5</div>
<div class="t" style="right:524.40px;top:276.77px;font-size:10.78px;color:#333;font-weight:400;transform:scaleX(0.9091);transform-origin:right;-webkit-text-stroke:0.25px currentColor">$379.00</div>
<div class="t" style="right:430.50px;top:276.77px;font-size:10.78px;color:#333;font-weight:400;transform:scaleX(0.9091);transform-origin:right;-webkit-text-stroke:0.25px currentColor">$350.00</div>
<div class="t" style="right:301.60px;top:276.77px;font-size:10.78px;color:#333;font-weight:400;transform:scaleX(0.9091);transform-origin:right;-webkit-text-stroke:0.25px currentColor">$29.00</div>
<div class="t" style="left:19.50px;top:292.08px;font-size:10.89px;color:#333;font-weight:400;transform:scaleX(0.9091);transform-origin:left;-webkit-text-stroke:0.25px currentColor">Service 1</div>
<div class="t" style="right:524.40px;top:292.17px;font-size:10.78px;color:#333;font-weight:400;transform:scaleX(0.9091);transform-origin:right;-webkit-text-stroke:0.25px currentColor">$1,888.00</div>
<div class="t" style="right:430.50px;top:292.17px;font-size:10.78px;color:#333;font-weight:400;transform:scaleX(0.9091);transform-origin:right;-webkit-text-stroke:0.25px currentColor">$1,888.00</div>
<div class="t" style="right:301.60px;top:292.17px;font-size:10.78px;color:#333;font-weight:400;transform:scaleX(0.9091);transform-origin:right;-webkit-text-stroke:0.25px currentColor">$0.00</div>
<div class="t" style="left:19.50px;top:307.48px;font-size:10.89px;color:#333;font-weight:400;transform:scaleX(0.9091);transform-origin:left;-webkit-text-stroke:0.25px currentColor">Service 2</div>
<div class="t" style="right:524.40px;top:307.57px;font-size:10.78px;color:#333;font-weight:400;transform:scaleX(0.9091);transform-origin:right;-webkit-text-stroke:0.25px currentColor">$1,222.00</div>
<div class="t" style="right:430.50px;top:307.57px;font-size:10.78px;color:#333;font-weight:400;transform:scaleX(0.9091);transform-origin:right;-webkit-text-stroke:0.25px currentColor">$1,222.00</div>
<div class="t" style="right:301.60px;top:307.57px;font-size:10.78px;color:#333;font-weight:400;transform:scaleX(0.9091);transform-origin:right;-webkit-text-stroke:0.25px currentColor">$0.00</div>
<div class="t" style="left:19.50px;top:322.88px;font-size:10.89px;color:#333;font-weight:400;transform:scaleX(0.9091);transform-origin:left;-webkit-text-stroke:0.25px currentColor">Service 3</div>
<div class="t" style="right:524.40px;top:322.97px;font-size:10.78px;color:#333;font-weight:400;transform:scaleX(0.9091);transform-origin:right;-webkit-text-stroke:0.25px currentColor">$778.00</div>
<div class="t" style="right:430.50px;top:322.97px;font-size:10.78px;color:#333;font-weight:400;transform:scaleX(0.9091);transform-origin:right;-webkit-text-stroke:0.25px currentColor">$650.00</div>
<div class="t" style="right:301.60px;top:322.97px;font-size:10.78px;color:#333;font-weight:400;transform:scaleX(0.9091);transform-origin:right;-webkit-text-stroke:0.25px currentColor">$128.00</div>
<div class="t" style="left:19.50px;top:338.28px;font-size:10.89px;color:#333;font-weight:400;transform:scaleX(0.9091);transform-origin:left;-webkit-text-stroke:0.25px currentColor">Service 4</div>
<div class="t" style="right:524.40px;top:338.37px;font-size:10.78px;color:#333;font-weight:400;transform:scaleX(0.9091);transform-origin:right;-webkit-text-stroke:0.25px currentColor">$209.00</div>
<div class="t" style="right:430.50px;top:338.37px;font-size:10.78px;color:#333;font-weight:400;transform:scaleX(0.9091);transform-origin:right;-webkit-text-stroke:0.25px currentColor">$200.00</div>
<div class="t" style="right:301.60px;top:338.37px;font-size:10.78px;color:#333;font-weight:400;transform:scaleX(0.9091);transform-origin:right;-webkit-text-stroke:0.25px currentColor">$9.00</div>
<div class="t" style="left:19.50px;top:353.68px;font-size:10.89px;color:#333;font-weight:400;transform:scaleX(0.9091);transform-origin:left;-webkit-text-stroke:0.25px currentColor">Service 5</div>
<div class="t" style="right:524.40px;top:353.77px;font-size:10.78px;color:#333;font-weight:400;transform:scaleX(0.9091);transform-origin:right;-webkit-text-stroke:0.25px currentColor">$322.00</div>
<div class="t" style="right:430.50px;top:353.77px;font-size:10.78px;color:#333;font-weight:400;transform:scaleX(0.9091);transform-origin:right;-webkit-text-stroke:0.25px currentColor">$450.00</div>
<div class="t" style="right:299.00px;top:353.87px;font-size:10.67px;color:#c8363a;font-weight:400;transform:scaleX(0.9091);transform-origin:right;-webkit-text-stroke:0.25px currentColor">($128.00)</div>
<div class="t" style="left:19.40px;top:368.57px;font-size:11.50px;color:#3a1a86;font-weight:400;transform:scaleX(0.9091);transform-origin:left;-webkit-text-stroke:0.25px currentColor">Subtotals</div>
</div></body></html>
